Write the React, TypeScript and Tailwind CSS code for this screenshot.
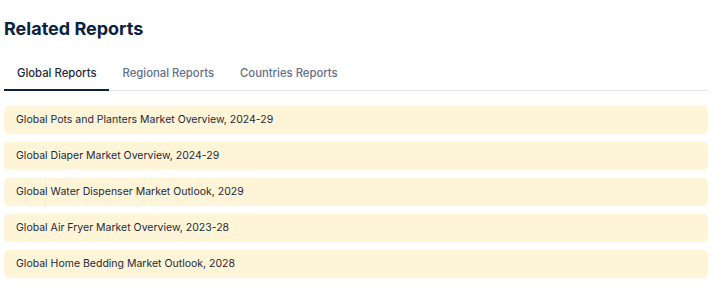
import React, { useState } from "react";

const tabs = ["Global Reports", "Regional Reports", "Countries Reports"];

const reports = [
  "Global Pots and Planters Market Overview, 2024-29",
  "Global Diaper Market Overview, 2024-29",
  "Global Water Dispenser Market Outlook, 2029",
  "Global Air Fryer Market Overview, 2023-28",
  "Global Home Bedding Market Outlook, 2028",
];

const App: React.FC = () => {
  const [active, setActive] = useState(0);

  return (
    <div className="w-[723px] h-[288px] bg-white font-['Inter',sans-serif] overflow-hidden">
      <div className="w-[704px] ml-[4px] pt-[17px]">
        <h2 className="text-[18px] leading-[24px] font-bold text-[#0b2341]">Related Reports</h2>
        <div className="flex mt-[20px] border-b border-[#e5e7eb]">
          {tabs.map((t, i) => (
            <button
              key={t}
              onClick={() => setActive(i)}
              className={
                i === active
                  ? "px-[13px] pt-[4px] pb-[8px] text-[11.3px] leading-[16px] font-medium text-[#1f2937] border-b-2 border-[#0b2341] -mb-px"
                  : "px-[13px] pt-[4px] pb-[8px] text-[11.3px] leading-[16px] font-medium text-[#64708a] border-b-2 border-transparent -mb-px"
              }
            >
              {t}
            </button>
          ))}
        </div>
        <div className="flex flex-col gap-[8px] mt-[15px]">
          {reports.map((r) => (
            <div
              key={r}
              className="h-[28px] flex items-center px-[12px] rounded-[5px] bg-[#fef5d9] text-[10.5px] text-[#1f2937]"
            >
              {r}
            </div>
          ))}
        </div>
      </div>
    </div>
  );
};

export default App;
